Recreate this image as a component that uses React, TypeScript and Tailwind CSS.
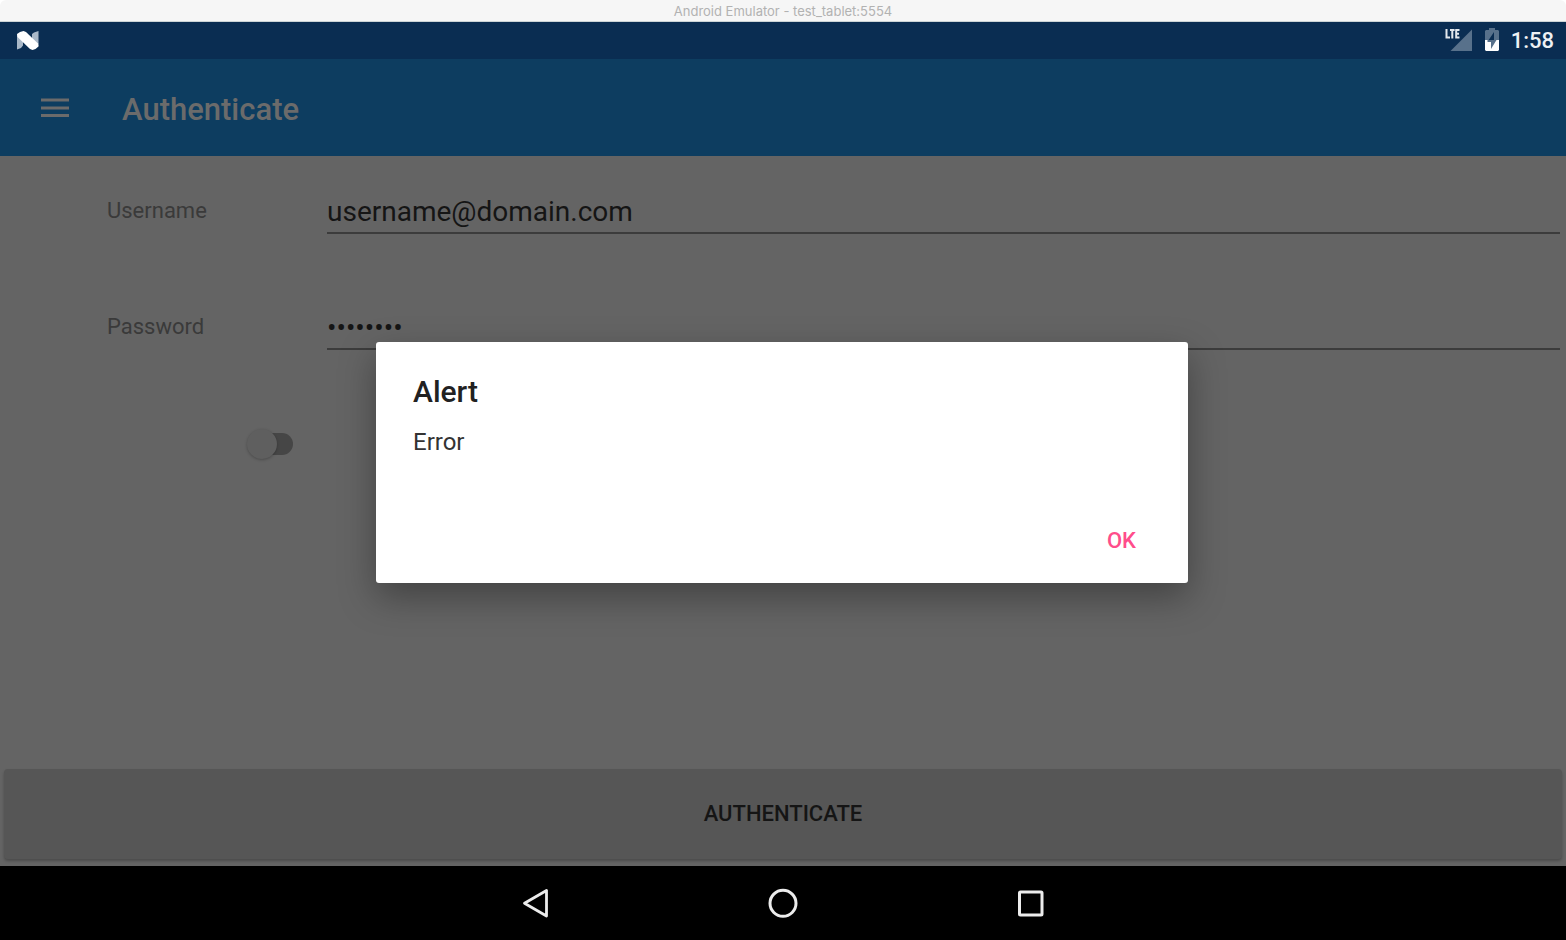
import React from "react";

function TitleBar() {
  return (
    <header className="flex h-[22px] shrink-0 items-center justify-center rounded-t-md border-b border-[#cdd4d6] bg-[#f6f6f6] pt-0.5 font-[Inter,sans-serif] text-[13px] text-[#b2b2b2]">
      Android Emulator - test_tablet:5554
    </header>
  );
}

function StatusBar() {
  return (
    <div className="flex h-[37px] shrink-0 items-center justify-between bg-[#0a2d52] pr-3 pl-4">
      <svg width="23" height="19" viewBox="0 0 23 19" aria-hidden="true">
        <path d="M1 3 L7 5 V14.5 L5 17 L1 18.5 Z M16 3 L18 1.5 L22.5 0 V15 L16 12 Z" fill="#a9b8c8" />
        <path d="M1 3 L4 1 L7.5 0 L10 1 L22 12.5 L22.5 15.5 L19.5 18 L16.5 19 L14 18 L1.5 6 Z" fill="#ffffff" />
      </svg>
      <div className="flex items-center">
        <svg width="28" height="24" viewBox="0 0 28 24" className="mr-3" aria-hidden="true">
          <path d="M28 0.5 V22 H6.5 Z" fill="#58718b" />
          <path
            d="M2.5 0 V8.5 H6 M6 1 H10.6 M8.3 1 V9.5 M15.5 1 H12.2 V8.5 H15.5 M12.2 4.8 H15"
            fill="none"
            stroke="#e3e8ed"
            strokeWidth="2"
          />
        </svg>
        <svg width="16" height="26" viewBox="0 0 16 26" className="mr-[11px]" aria-hidden="true">
          <path d="M5 0 H11 V2 H14 L15 3 V12 H1 V3 L2 2 H5 Z" fill="#58718b" />
          <path d="M1 12 H15 V22 L14 23 H2 L1 22 Z" fill="#ffffff" />
          <path d="M10 4 L4 13 H7 V12 H10 Z" fill="#0a2d52" />
          <path d="M3.5 12 H12.5 L7 21 V14 H3.5 Z" fill="#58718b" />
        </svg>
        <span className="text-[22px] leading-none font-medium text-[#eef1f4]">1:58</span>
      </div>
    </div>
  );
}

function AppBar() {
  return (
    <div className="flex h-[97px] shrink-0 items-center bg-[#0d3d60] pl-[41px] text-[#6b6b6b]">
      <button type="button" aria-label="Menu" className="mr-[53px]">
        <svg width="28" height="20" viewBox="0 0 28 20">
          <path d="M0 2 H28 M0 10 H28 M0 17.5 H28" stroke="currentColor" strokeWidth="3" />
        </svg>
      </button>
      <h1 className="pt-1 text-[31px] leading-none font-medium">Authenticate</h1>
    </div>
  );
}

const labelStyle = "w-[220px] shrink-0 pb-0.5 text-[22px] text-[#3a3a3a]";
const inputStyle =
  "h-[45px] min-w-0 flex-1 border-b-2 border-[#3c3c3c] bg-transparent pt-0.5 text-[28px] text-[#151515] outline-none";

function LoginForm() {
  return (
    <form className="flex flex-1 flex-col bg-[#646464]" onSubmit={(e) => e.preventDefault()}>
      <div className="flex flex-col gap-[71px] pt-[33px] pr-[6px] pl-[107px]">
        <div className="flex items-center">
          <label htmlFor="username" className={labelStyle}>Username</label>
          <input id="username" type="text" defaultValue="username@domain.com" className={inputStyle} />
        </div>
        <div className="flex items-center">
          <label htmlFor="password" className={labelStyle}>Password</label>
          <input id="password" type="password" defaultValue="password" className={inputStyle} />
        </div>
        <div className="flex h-[45px] items-center pl-[140px]">
          <input
            type="checkbox"
            role="switch"
            aria-label="Remember"
            className="flex h-[30px] w-[46px] appearance-none items-center before:z-10 before:size-[30px] before:shrink-0 before:rounded-full before:bg-[#5f5f5f] before:shadow-[0_1px_3px_rgba(0,0,0,0.25)] after:-ml-3 after:h-[22px] after:w-7 after:rounded-r-full after:bg-[#464646] checked:flex-row-reverse"
          />
        </div>
      </div>
      <button
        type="submit"
        className="mx-1 mt-auto mb-[7px] h-[90px] rounded bg-[#565656] pb-0.5 text-[22px] font-medium text-[#151515] shadow-[0_2px_3px_rgba(0,0,0,0.25)]"
      >
        AUTHENTICATE
      </button>
    </form>
  );
}

function AlertDialog() {
  return (
    <div className="absolute inset-0 flex items-center justify-center pr-0.5">
      <div
        role="alertdialog"
        aria-labelledby="alert-title"
        aria-describedby="alert-message"
        className="flex h-[241px] w-[812px] max-w-[90%] flex-col rounded-[3px] bg-white px-[37px] pt-8 pb-6 shadow-[0_14px_36px_rgba(0,0,0,0.34)]"
      >
        <h2 id="alert-title" className="text-[30px] leading-9 font-medium text-[#212121]">Alert</h2>
        <p id="alert-message" className="mt-4 text-[24px] leading-8 text-[#333333]">Error</p>
        <button type="button" className="mt-auto self-end px-[15px] text-[22px] leading-9 font-medium text-[#ff4d8b]">
          OK
        </button>
      </div>
    </div>
  );
}

function NavigationBar() {
  return (
    <nav className="flex h-[74px] shrink-0 items-center justify-center gap-[218px] bg-black text-[#ececec]">
      <button type="button" aria-label="Back">
        <svg width="30" height="30" viewBox="0 0 30 30" fill="none" stroke="currentColor" strokeWidth="2.8">
          <path d="M26.5 2.5 V28 L4.5 15.3 Z" strokeLinejoin="round" />
        </svg>
      </button>
      <button type="button" aria-label="Home">
        <svg width="30" height="30" viewBox="0 0 30 30" fill="none" stroke="currentColor" strokeWidth="3">
          <circle cx="15" cy="15.3" r="13" />
        </svg>
      </button>
      <button type="button" aria-label="Overview">
        <svg width="30" height="30" viewBox="0 0 30 30" fill="none" stroke="currentColor" strokeWidth="3">
          <rect x="3.5" y="4" width="22.5" height="23" rx="1" />
        </svg>
      </button>
    </nav>
  );
}

export default function App() {
  return (
    <div className="flex min-h-screen flex-col bg-white font-[Roboto,sans-serif]">
      <TitleBar />
      <StatusBar />
      <main className="relative flex flex-1 flex-col">
        <AppBar />
        <LoginForm />
        <AlertDialog />
      </main>
      <NavigationBar />
    </div>
  );
}
